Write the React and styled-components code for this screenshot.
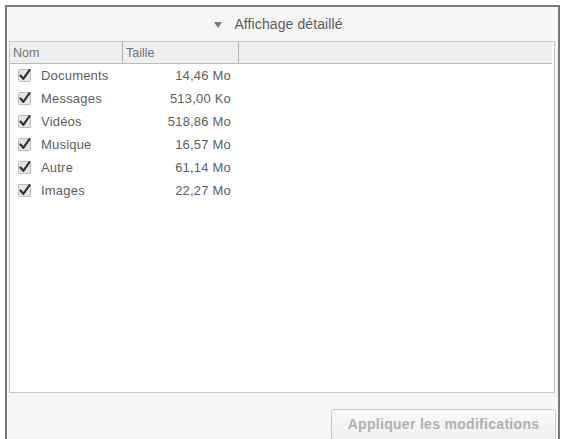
import React from "react";
import styled, { createGlobalStyle } from "styled-components";

const GlobalStyle = createGlobalStyle`
  html, body {
    margin: 0;
    padding: 0;
    background: #ffffff;
    overflow: hidden;
  }
  body {
    font-family: "Liberation Sans", Arial, sans-serif;
  }
`;

const Frame = styled.div`
  margin: 5px 0 0 5px;
  width: 551px;
  height: 450px;
  border: 2px solid #7a7a7a;
  border-bottom: none;
  background: #f6f6f6;
  display: flex;
  flex-direction: column;
`;

const TitleBar = styled.div`
  height: 34px;
  display: flex;
  align-items: center;
  justify-content: center;
  gap: 12px;
  color: #5c5c5c;
  font-size: 14px;
  letter-spacing: 0.1px;
  padding-right: 8px;
`;

const Arrow = styled.span`
  width: 0;
  height: 0;
  border-left: 4px solid transparent;
  border-right: 4px solid transparent;
  border-top: 6px solid #7a7a7a;
  margin-top: 1px;
`;

const Panel = styled.div`
  margin: 0 3px 0 2px;
  height: 350px;
  border: 1px solid #c6c6c6;
  background: #fff;
  display: flex;
  flex-direction: column;
`;

const HeaderRow = styled.div`
  display: flex;
  height: 21px;
  margin-right: 2px;
  background: #efefef;
  border-bottom: 1px solid #b9b9b9;
`;

const HeaderCell = styled.div`
  width: ${(p) => p.w || "auto"};
  flex: ${(p) => (p.w ? "none" : "1")};
  border-right: ${(p) => (p.last ? "none" : "1px solid #b3b3b3")};
  display: flex;
  align-items: center;
  padding-left: 3px;
  box-sizing: border-box;
  font-size: 12.5px;
  color: #707070;
`;

const Row = styled.div`
  display: flex;
  align-items: center;
  height: 23px;
  font-size: 13px;
  color: #5e5e5e;
  letter-spacing: 0.2px;
`;

const NameCell = styled.div`
  width: 112px;
  display: flex;
  align-items: center;
  gap: 9px;
  padding-left: 8px;
  box-sizing: border-box;
`;

const SizeCell = styled.div`
  width: 109px;
  text-align: right;
`;

const Footer = styled.div`
  display: flex;
  justify-content: flex-end;
  padding: 16px 2px 0 0;
`;

const ApplyButton = styled.button`
  width: 225px;
  height: 34px;
  border: 1px solid #c9c9c9;
  border-radius: 3px;
  background: linear-gradient(#f9f9f9, #efefef);
  color: #b0b0b0;
  font-family: "Liberation Sans", Arial, sans-serif;
  font-weight: bold;
  font-size: 14px;
  letter-spacing: 0.3px;
  padding: 0 0 4px 0;
`;

const Check = () => (
  <svg width="14" height="13" viewBox="0 0 14 13">
    <rect x="0.5" y="0.5" width="12" height="12" rx="1" fill="#e6e6e6" stroke="#bdbdbd" />
    <path d="M2.5 6.5 L5.3 9.8 L11.5 1.2" fill="none" stroke="#333" strokeWidth="2.2" strokeLinecap="round" strokeLinejoin="round" />
  </svg>
);

const items = [
  ["Documents", "14,46 Mo"],
  ["Messages", "513,00 Ko"],
  ["Vidéos", "518,86 Mo"],
  ["Musique", "16,57 Mo"],
  ["Autre", "61,14 Mo"],
  ["Images", "22,27 Mo"],
];

const App = () => {
  return (
    <>
      <GlobalStyle />
      <Frame>
        <TitleBar>
          <Arrow />
          Affichage détaillé
        </TitleBar>
        <Panel>
          <HeaderRow>
            <HeaderCell w="113px">Nom</HeaderCell>
            <HeaderCell w="116px">Taille</HeaderCell>
            <HeaderCell last />
          </HeaderRow>
          {items.map(([name, size]) => (
            <Row key={name}>
              <NameCell>
                <Check />
                {name}
              </NameCell>
              <SizeCell>{size}</SizeCell>
            </Row>
          ))}
        </Panel>
        <Footer>
          <ApplyButton disabled>Appliquer les modifications</ApplyButton>
        </Footer>
      </Frame>
    </>
  );
};

export default App;
